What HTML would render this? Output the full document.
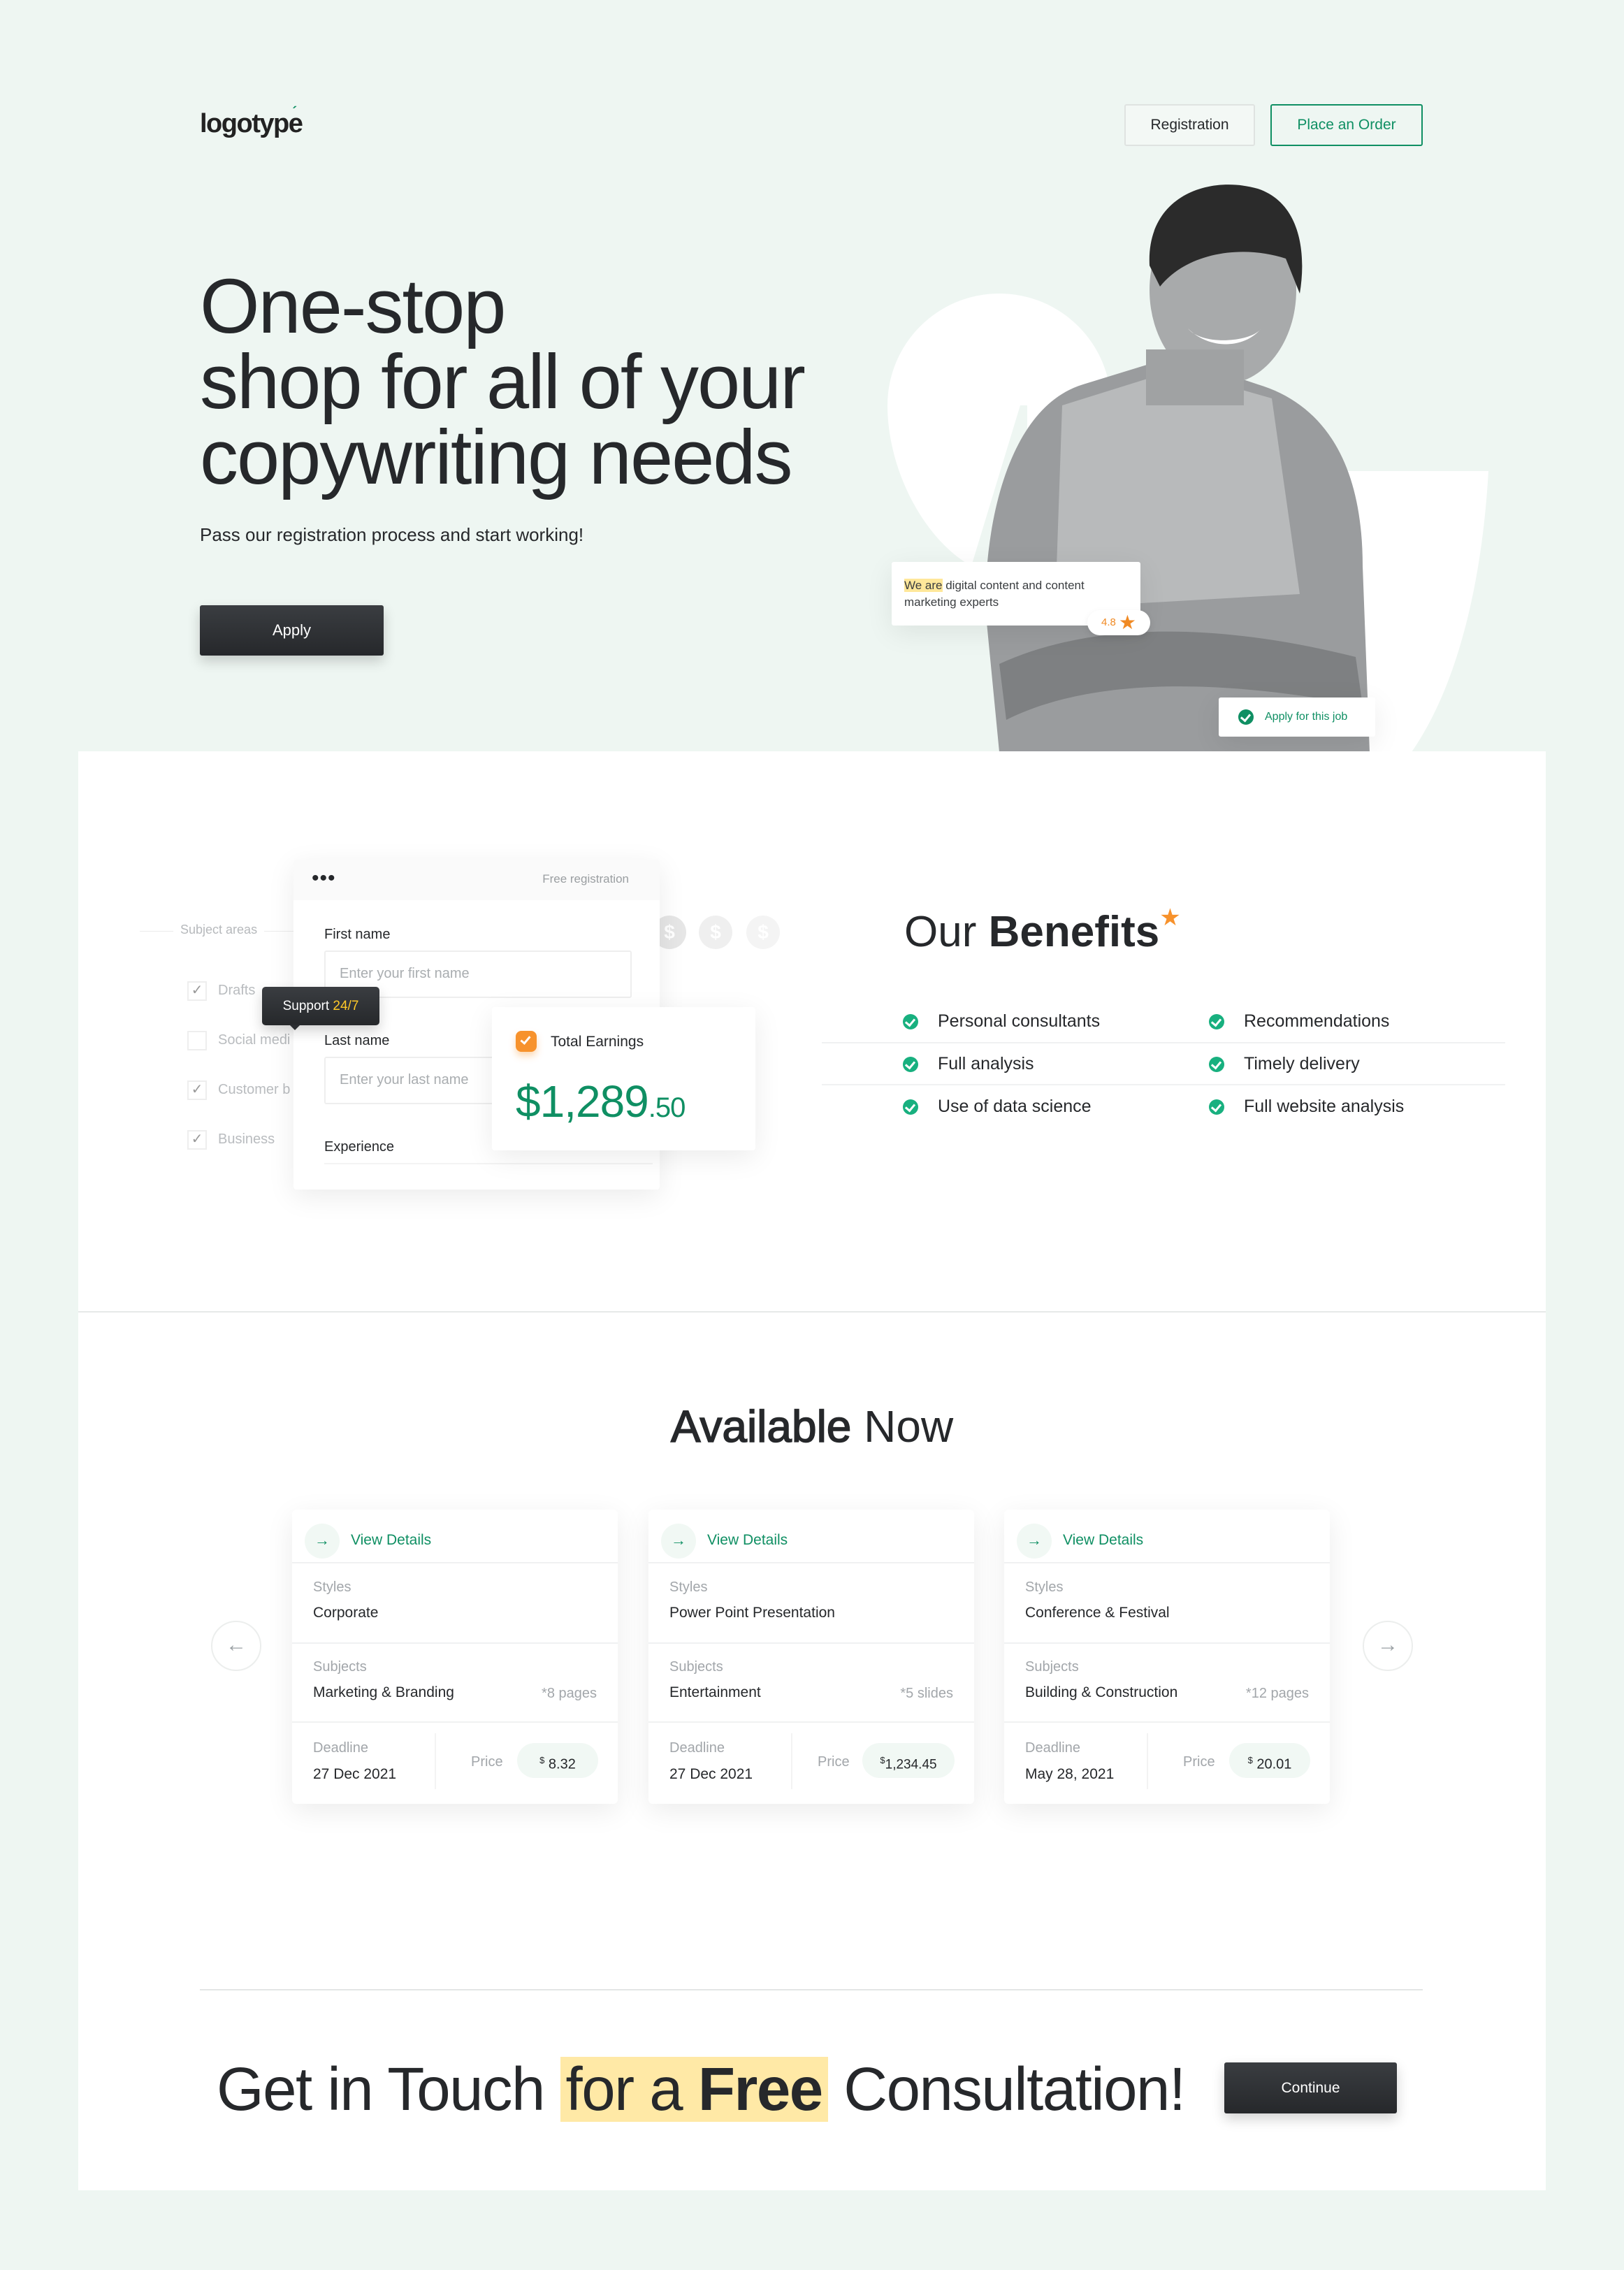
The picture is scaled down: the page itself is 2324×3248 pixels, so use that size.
<!DOCTYPE html>
<html><head><meta charset="utf-8">
<style>
*{box-sizing:border-box;margin:0;padding:0}
body{width:2324px;height:3248px;background:#eef6f2;font-family:"Liberation Sans",sans-serif;color:#26282b;position:relative;overflow:hidden}
.a{position:absolute}
.btn{position:absolute;display:flex;align-items:center;justify-content:center;font-size:21px}
.dark{background:linear-gradient(#3a3d41,#26282b);color:#fff;box-shadow:0 8px 18px rgba(0,0,0,.18);border-radius:3px}
.card{position:absolute;background:#fff;box-shadow:0 10px 40px rgba(0,0,0,.08);border-radius:6px}
.chk{position:absolute;width:22px;height:22px;border-radius:50%;background:#18b07f}
.chk:after{content:"";position:absolute;left:6px;top:4px;width:6px;height:10px;border:solid #fff;border-width:0 3px 3px 0;transform:rotate(40deg)}
.lbl{color:#a2a6aa;font-size:20px}
.val{color:#26282b;font-size:21px}
.line{position:absolute;height:2px;background:#f0f1f2}
.coin{position:absolute;width:48px;height:48px;border-radius:50%;color:#fff;font-size:28px;font-weight:bold;text-align:center;line-height:48px}
</style></head><body>
<!-- header -->
<div class="a" style="left:286px;top:156px;font-size:38px;font-weight:bold;letter-spacing:-1.5px;color:#222">logotype<span style="color:#0f8f63;font-size:20px;position:relative;top:-22px;left:-14px">´</span></div>
<div class="btn" style="left:1609px;top:149px;width:187px;height:60px;border:2px solid #dfe3e1;background:#f3f8f5;border-radius:3px;color:#26282b">Registration</div>
<div class="btn" style="left:1818px;top:149px;width:218px;height:60px;border:2px solid #0f8f63;border-radius:3px;color:#0f8f63">Place an Order</div>
<!-- hero text -->
<div class="a" style="left:286px;top:385px;font-size:110px;line-height:108px;color:#26282b;letter-spacing:-2px;white-space:nowrap">One-stop<br>shop for all of your<br>copywriting needs</div>
<div class="a" style="left:286px;top:750px;font-size:26px">Pass our registration process and start working!</div>
<div class="btn dark" style="left:286px;top:866px;width:263px;height:72px;font-size:22px">Apply</div>
<!-- hero image -->
<svg class="a" style="left:1260px;top:250px" width="900" height="826" viewBox="0 0 900 826">
<path d="M640 424 L870 424 C860 600 820 740 760 826 L640 826Z" fill="#fff"/>
<circle cx="170" cy="330" r="160" fill="#fff"/>
<rect x="10" y="330" width="200" height="496" fill="#eef6f2"/>
<path d="M10 330 C10 420 60 520 130 560 L200 330Z" fill="#fff"/>
<path d="M170 826 L150 620 C150 480 190 330 290 300 L420 260 L540 300 C640 330 690 420 690 560 L700 826Z" fill="#9a9c9e"/>
<path d="M260 330 L420 280 L560 320 L600 600 L250 620Z" fill="#b8babb"/>
<path d="M170 700 C300 640 480 640 680 690 L690 760 C480 720 300 720 180 780Z" fill="#7e8082"/>
<ellipse cx="490" cy="165" rx="105" ry="135" fill="#a8aaab"/>
<path d="M385 130 C380 30 470 0 540 20 C600 40 610 110 600 170 L580 120 C520 100 440 110 400 160Z" fill="#2b2b2b"/>
<path d="M440 220 C470 250 520 250 545 220 C530 240 460 245 440 220Z" fill="#fff"/>
<rect x="380" y="250" width="140" height="80" fill="#a0a2a3"/>
</svg>
<div class="card a" style="left:1276px;top:804px;width:356px;height:91px;border-radius:3px;padding:22px 18px;font-size:17px;line-height:24px;color:#3a3d40"><span style="background:#ffe79a">We are</span> digital content and content marketing experts
<div class="a" style="right:-14px;bottom:-14px;width:90px;height:36px;background:#fff;border-radius:18px;box-shadow:0 4px 10px rgba(0,0,0,.08);font-size:15px;color:#f08a24;display:flex;align-items:center;justify-content:center">4.8 <span style="font-size:28px;margin-left:4px">★</span></div></div>
<div class="card a" style="left:1744px;top:998px;width:224px;height:56px;border-radius:3px;display:flex;align-items:center;padding-left:28px;font-size:16px;color:#0f8f63"><span class="chk" style="position:relative;background:#0f8f63;margin-right:16px"></span>Apply for this job</div>
<!-- white panel -->
<div class="a" style="left:112px;top:1075px;width:2100px;height:2059px;background:#fff"></div>
<div class="line" style="left:112px;top:1876px;width:2100px;background:#e6e9e8"></div>
<!-- form section -->
<div class="a" style="left:200px;top:1332px;width:225px;height:1px;background:#ececec"></div>
<div class="a" style="left:248px;top:1320px;background:#fff;padding:0 10px;font-size:18px;color:#b6b9bc">Subject areas</div>
<div class="a" style="left:268px;top:1382px;font-size:20px;color:#b9bcbf;line-height:71px">
<div><span style="display:inline-block;width:28px;height:28px;border:2px solid #eee;vertical-align:middle;margin-right:16px;text-align:center;line-height:22px;color:#999">✓</span>Drafts</div>
<div><span style="display:inline-block;width:28px;height:28px;border:2px solid #eee;vertical-align:middle;margin-right:16px"></span>Social medi</div>
<div><span style="display:inline-block;width:28px;height:28px;border:2px solid #eee;vertical-align:middle;margin-right:16px;text-align:center;line-height:22px;color:#999">✓</span>Customer b</div>
<div><span style="display:inline-block;width:28px;height:28px;border:2px solid #eee;vertical-align:middle;margin-right:16px;text-align:center;line-height:22px;color:#999">✓</span>Business</div>
</div>
<div class="coin" style="left:934px;top:1310px;background:#e6e6e6">$</div>
<div class="coin" style="left:1000px;top:1310px;background:#efefef">$</div>
<div class="coin" style="left:1068px;top:1310px;background:#f4f4f4">$</div>
<div class="card" style="left:420px;top:1230px;width:524px;height:472px;border-radius:4px;overflow:hidden">
<div style="height:58px;background:#fafafa;position:relative"><div class="a" style="left:26px;top:10px;font-size:30px;letter-spacing:1px">•••</div><div class="a" style="right:44px;top:18px;font-size:17px;color:#9a9ea1">Free registration</div></div>
<div class="a" style="left:44px;top:96px;font-size:20px">First name</div>
<div class="a" style="left:44px;top:130px;width:440px;height:68px;border:2px solid #eee;border-radius:3px;padding:20px;font-size:20px;color:#a9adb0">Enter your first name</div>
<div class="a" style="left:44px;top:248px;font-size:20px">Last name</div>
<div class="a" style="left:44px;top:282px;width:440px;height:68px;border:2px solid #eee;border-radius:3px;padding:20px;font-size:20px;color:#a9adb0">Enter your last name</div>
<div class="a" style="left:44px;top:400px;font-size:20px">Experience</div>
<div class="a" style="left:44px;top:434px;width:470px;height:2px;background:#f3f3f3"></div>
</div>
<div class="a dark" style="left:375px;top:1412px;width:168px;height:55px;font-size:19px;display:flex;align-items:center;justify-content:center;border-radius:5px">Support&nbsp;<span style="color:#ffc928">24/7</span></div>
<div class="a" style="left:414px;top:1466px;border:8px solid transparent;border-top-color:#2b2d31"></div>
<div class="card" style="left:704px;top:1441px;width:377px;height:205px;border-radius:4px">
<div class="a" style="left:34px;top:34px;width:30px;height:30px;border-radius:8px;background:#f7922c;box-shadow:0 6px 10px rgba(247,146,44,.35)"><div class="a" style="left:10px;top:5px;width:8px;height:14px;border:solid #fff;border-width:0 3px 3px 0;transform:rotate(40deg)"></div></div>
<div class="a" style="left:84px;top:38px;font-size:21px">Total Earnings</div>
<div class="a" style="left:34px;top:98px;font-size:64px;color:#0f8f63;letter-spacing:-1px">$1,289<span style="font-size:40px">.50</span></div>
</div>
<!-- benefits -->
<div class="a" style="left:1294px;top:1298px;font-size:62px;color:#26282b">Our <b>Benefits</b><span style="color:#f7922c;font-size:34px;position:relative;top:-30px">★</span></div>
<div class="line" style="left:1176px;top:1491px;width:978px"></div>
<div class="line" style="left:1176px;top:1551px;width:978px"></div>
<div class="a" style="left:1292px;top:1431px;font-size:25px;line-height:61px">
<div style="position:relative;padding-left:50px"><span class="chk" style="left:0;top:20px"></span>Personal consultants</div>
<div style="position:relative;padding-left:50px"><span class="chk" style="left:0;top:20px"></span>Full analysis</div>
<div style="position:relative;padding-left:50px"><span class="chk" style="left:0;top:20px"></span>Use of data science</div>
</div>
<div class="a" style="left:1730px;top:1431px;font-size:25px;line-height:61px">
<div style="position:relative;padding-left:50px"><span class="chk" style="left:0;top:20px"></span>Recommendations</div>
<div style="position:relative;padding-left:50px"><span class="chk" style="left:0;top:20px"></span>Timely delivery</div>
<div style="position:relative;padding-left:50px"><span class="chk" style="left:0;top:20px"></span>Full website analysis</div>
</div>
<!-- available now -->
<div class="a" style="left:0;width:2324px;top:2004px;text-align:center;font-size:64px"><span style="-webkit-text-stroke:1.5px #26282b">Available</span> Now</div>
<div class="a" style="left:302px;top:2319px;width:72px;height:72px;border-radius:50%;border:2px solid #eceeed;color:#9aa0a4;font-size:30px;text-align:center;line-height:66px">←</div>
<div class="a" style="left:1950px;top:2319px;width:72px;height:72px;border-radius:50%;border:2px solid #eceeed;color:#9aa0a4;font-size:30px;text-align:center;line-height:66px">→</div>

<div class="card" style="left:418px;top:2160px;width:466px;height:421px">
<div class="a" style="left:18px;top:20px;width:50px;height:50px;border-radius:50%;background:#f1f8f4;color:#0f8f63;text-align:center;line-height:48px;font-size:22px">→</div>
<div class="a" style="left:84px;top:32px;font-size:21px;color:#0f8f63">View Details</div>
<div class="line" style="left:0;top:75px;width:100%"></div>
<div class="a lbl" style="left:30px;top:100px">Styles</div><div class="a val" style="left:30px;top:136px">Corporate</div>
<div class="line" style="left:0;top:190px;width:100%"></div>
<div class="a lbl" style="left:30px;top:214px">Subjects</div><div class="a val" style="left:30px;top:250px">Marketing &amp; Branding</div><div class="a lbl" style="right:30px;top:252px">*8 pages</div>
<div class="line" style="left:0;top:303px;width:100%"></div>
<div class="a lbl" style="left:30px;top:330px">Deadline</div><div class="a val" style="left:30px;top:367px">27 Dec 2021</div>
<div class="a" style="left:204px;top:320px;width:2px;height:80px;background:#f3f3f3"></div>
<div class="a lbl" style="left:256px;top:350px">Price</div>
<div class="a" style="left:322px;top:334px;width:116px;height:50px;border-radius:25px;background:#f1f8f4;font-size:20px;text-align:center;line-height:50px"><sup style="font-size:13px">$</sup> 8.32</div>
</div>

<div class="card" style="left:928px;top:2160px;width:466px;height:421px">
<div class="a" style="left:18px;top:20px;width:50px;height:50px;border-radius:50%;background:#f1f8f4;color:#0f8f63;text-align:center;line-height:48px;font-size:22px">→</div>
<div class="a" style="left:84px;top:32px;font-size:21px;color:#0f8f63">View Details</div>
<div class="line" style="left:0;top:75px;width:100%"></div>
<div class="a lbl" style="left:30px;top:100px">Styles</div><div class="a val" style="left:30px;top:136px">Power Point Presentation</div>
<div class="line" style="left:0;top:190px;width:100%"></div>
<div class="a lbl" style="left:30px;top:214px">Subjects</div><div class="a val" style="left:30px;top:250px">Entertainment</div><div class="a lbl" style="right:30px;top:252px">*5 slides</div>
<div class="line" style="left:0;top:303px;width:100%"></div>
<div class="a lbl" style="left:30px;top:330px">Deadline</div><div class="a val" style="left:30px;top:367px">27 Dec 2021</div>
<div class="a" style="left:204px;top:320px;width:2px;height:80px;background:#f3f3f3"></div>
<div class="a lbl" style="left:242px;top:350px">Price</div>
<div class="a" style="left:306px;top:334px;width:132px;height:50px;border-radius:25px;background:#f1f8f4;font-size:19px;text-align:center;line-height:50px"><sup style="font-size:13px">$</sup>1,234.45</div>
</div>

<div class="card" style="left:1437px;top:2160px;width:466px;height:421px">
<div class="a" style="left:18px;top:20px;width:50px;height:50px;border-radius:50%;background:#f1f8f4;color:#0f8f63;text-align:center;line-height:48px;font-size:22px">→</div>
<div class="a" style="left:84px;top:32px;font-size:21px;color:#0f8f63">View Details</div>
<div class="line" style="left:0;top:75px;width:100%"></div>
<div class="a lbl" style="left:30px;top:100px">Styles</div><div class="a val" style="left:30px;top:136px">Conference &amp; Festival</div>
<div class="line" style="left:0;top:190px;width:100%"></div>
<div class="a lbl" style="left:30px;top:214px">Subjects</div><div class="a val" style="left:30px;top:250px">Building &amp; Construction</div><div class="a lbl" style="right:30px;top:252px">*12 pages</div>
<div class="line" style="left:0;top:303px;width:100%"></div>
<div class="a lbl" style="left:30px;top:330px">Deadline</div><div class="a val" style="left:30px;top:367px">May 28, 2021</div>
<div class="a" style="left:204px;top:320px;width:2px;height:80px;background:#f3f3f3"></div>
<div class="a lbl" style="left:256px;top:350px">Price</div>
<div class="a" style="left:322px;top:334px;width:116px;height:50px;border-radius:25px;background:#f1f8f4;font-size:20px;text-align:center;line-height:50px"><sup style="font-size:13px">$</sup> 20.01</div>
</div>

<!-- CTA -->
<div class="line" style="left:286px;top:2846px;width:1750px;background:#e3e6e5"></div>
<div class="a" style="left:310px;top:2943px;font-size:87px;line-height:93px;letter-spacing:-1.5px;white-space:nowrap">Get in Touch <span style="background:#ffe9a6;display:inline-block;padding:0 8px">for a <b>Free</b></span> Consultation!</div>
<div class="btn dark" style="left:1752px;top:2951px;width:247px;height:73px;font-size:21px">Continue</div>
</body></html>
